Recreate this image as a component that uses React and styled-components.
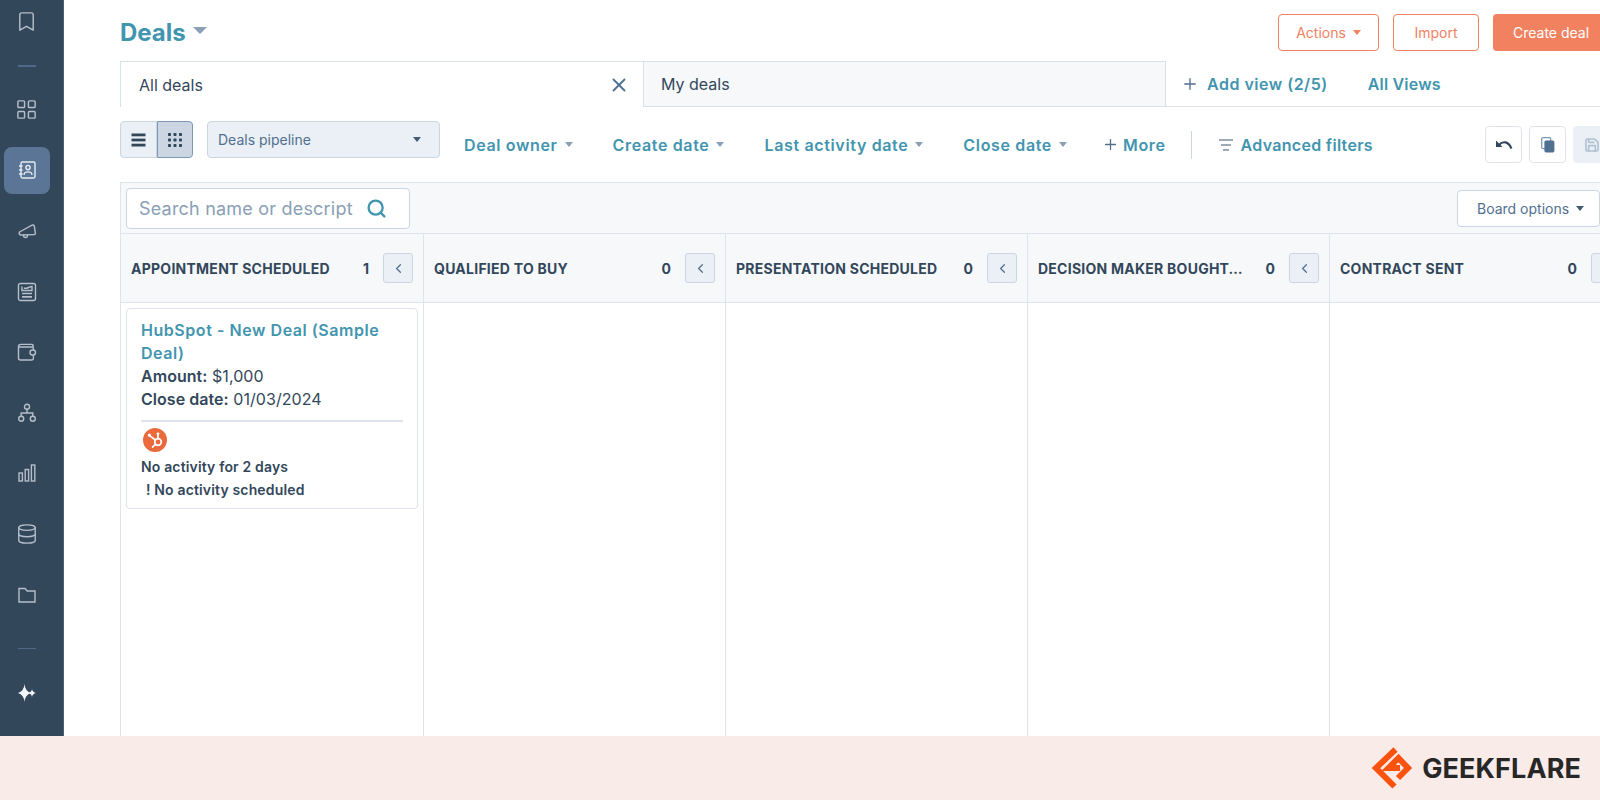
import styled, { createGlobalStyle } from "styled-components";
import { Bookmark, ChevronLeft, Database, LayoutGrid, Plus, Save, Search, X } from "lucide-react";

const TEAL = "#4295ae";
const SLATE = "#33475b";
const BORDER = "#dfe3eb";
const ORANGE = "#f2815f";
const PANEL = "#f6f8fa";

const FILTERS = ["Deal owner", "Create date", "Last activity date", "Close date"];

const COLUMNS = [
    { name: "APPOINTMENT SCHEDULED", count: 1 },
    { name: "QUALIFIED TO BUY", count: 0 },
    { name: "PRESENTATION SCHEDULED", count: 0 },
    { name: "DECISION MAKER BOUGHT-IN", count: 0 },
    { name: "CONTRACT SENT", count: 0 },
];

const RailSvg = ({ children }) => (
    <svg width="20" height="20" viewBox="0 0 20 20" fill="none" stroke="currentColor" strokeWidth="1.4">
        {children}
    </svg>
);

const ContactsIcon = () => (
    <RailSvg>
        <rect x="4" y="2" width="14" height="16" rx="1.4" />
        <path d="M2 6 H5.5 M2 10 H5.5 M2 14 H5.5" />
        <circle cx="11" cy="7.6" r="2.1" />
        <path d="M7 15 C7 10.8 15 10.8 15 15" />
    </RailSvg>
);

const MegaphoneIcon = () => (
    <RailSvg>
        <path d="M2.5 11 L15.5 4 Q17 3.8 17.3 5 L18.4 12.6 Q18.4 13.6 17.2 13.6 L3.4 14 Q1.6 13 2.5 11 Z" />
        <path d="M6.5 14 C6.5 17.4 10.5 17.4 10.5 14" />
    </RailSvg>
);

const NewsIcon = () => (
    <RailSvg>
        <rect x="1.5" y="1.5" width="17" height="17" rx="2" />
        <path d="M5 4.5 V8.5 H15 V4.5 C12 4.5 10 7.5 7 6" />
        <path d="M5 11.5 H15 M5 14.8 H15" strokeWidth="1.7" />
    </RailSvg>
);

const WalletIcon = () => (
    <RailSvg>
        <path d="M16 5 V3.4 Q16 2.4 14.8 2.4 H3.6 Q1.5 2.4 1.5 4.6 V16 Q1.5 18 3.5 18 H15 Q16.4 18 16.4 16.6 V13" />
        <path d="M2 5 H15 Q16.4 5 16.4 6.4 V8" />
        <rect x="13" y="8" width="5.5" height="5" rx="2.5" />
    </RailSvg>
);

const OrgIcon = () => (
    <RailSvg>
        <circle cx="10" cy="3.8" r="2.5" />
        <circle cx="4.2" cy="15.8" r="2.5" />
        <circle cx="15.8" cy="15.8" r="2.5" />
        <path d="M10 6.3 V10 M4.2 13.3 V10 H15.8 V13.3" />
    </RailSvg>
);

const BarsIcon = () => (
    <RailSvg>
        <rect x="2" y="10" width="3.4" height="8" />
        <rect x="8.2" y="6.5" width="3.4" height="11.5" />
        <rect x="14.4" y="2" width="3.4" height="16" />
    </RailSvg>
);

const FolderIcon = () => (
    <RailSvg>
        <path d="M2 3.5 H8 L10.2 6 H18 V17 H2 Z" />
    </RailSvg>
);

const SparkleIcon = () => (
    <svg width="20" height="20" viewBox="0 0 20 20" fill="currentColor">
        <path d="M7.5 1 Q8 8 14 10 Q8 12 7.5 19 Q7 12 1 10 Q7 8 7.5 1 Z" />
        <path d="M15 6 Q15.4 9.2 19 10 Q15.4 10.8 15 14 Q14.6 10.8 11.4 10 Q14.6 9.2 15 6 Z" />
    </svg>
);

const ListIcon = () => (
    <svg width="15" height="14" viewBox="0 0 15 14" fill={SLATE}>
        <rect x="0.5" y="0.5" width="14" height="2.8" />
        <rect x="0.5" y="5.6" width="14" height="2.8" />
        <rect x="0.5" y="10.7" width="14" height="2.8" />
    </svg>
);

const GridDotsIcon = () => (
    <svg width="16" height="16" viewBox="0 0 16 16" fill={SLATE}>
        {[1, 6.5, 12].map((y) =>
            [1, 6.5, 12].map((x) => <rect key={`${x}-${y}`} x={x} y={y} width="3" height="3" rx="0.7" />)
        )}
    </svg>
);

const UndoIcon = () => (
    <svg width="18" height="12" viewBox="0 0 18 12" fill={SLATE}>
        <path d="M1 1.5 V8 H7.5 Z" />
        <path d="M4 6 C8 1.5 13.5 2.5 16.4 9.5" fill="none" stroke={SLATE} strokeWidth="2.2" />
    </svg>
);

const CopyIcon = () => (
    <svg width="14" height="16" viewBox="0 0 14 16">
        <rect x="0.7" y="0.7" width="9" height="11" rx="1.4" fill="none" stroke="#7c98b6" strokeWidth="1.3" />
        <rect x="3.4" y="3.4" width="10" height="12" rx="1.6" fill="#516f90" />
    </svg>
);

const SprocketIcon = () => (
    <svg width="24" height="24" viewBox="0 0 24 24">
        <circle cx="12" cy="12" r="12" fill="#ea6a3e" />
        <g stroke="#fff" strokeWidth="1.7" fill="none" strokeLinecap="round">
            <circle cx="15" cy="14" r="3.3" />
            <path d="M15 10.7 V6.5" />
            <path d="M12.4 12.2 L7 7.8" />
            <path d="M12.6 16.4 L9.6 19" />
        </g>
        <circle cx="15" cy="5.8" r="1.4" fill="#fff" />
        <circle cx="6.4" cy="7.2" r="1.6" fill="#fff" />
    </svg>
);

const LogoMark = () => (
    <svg width="42" height="42" viewBox="0 0 42 42" fill="none" stroke="#fa5310" strokeWidth="6" strokeLinejoin="miter">
        <path d="M24.5 2.5 L5 21 L23.5 39.5" />
        <path d="M27 31 L37 21 L27.5 11 L17.5 21 H29" />
    </svg>
);

export default function App() {
    return (
        <>
            <GlobalStyle />
            <Page>
                <Main>
                    <Rail>
                        <RailItem $short><Bookmark size={23} strokeWidth={1.5} /></RailItem>
                        <RailLine />
                        <RailItem><LayoutGrid size={23} strokeWidth={1.5} /></RailItem>
                        <RailItem $active><ContactsIcon /></RailItem>
                        <RailItem><MegaphoneIcon /></RailItem>
                        <RailItem><NewsIcon /></RailItem>
                        <RailItem><WalletIcon /></RailItem>
                        <RailItem><OrgIcon /></RailItem>
                        <RailItem><BarsIcon /></RailItem>
                        <RailItem><Database size={22} strokeWidth={1.5} /></RailItem>
                        <RailItem><FolderIcon /></RailItem>
                        <RailLine />
                        <RailItem $bright><SparkleIcon /></RailItem>
                    </Rail>
                    <Content>
                        <TopRow>
                            <Title>Deals<TitleCaret /></Title>
                            <TopActions>
                                <OutlineButton>Actions<Caret $color={ORANGE} /></OutlineButton>
                                <OutlineButton $narrow>Import</OutlineButton>
                                <CreateButton>Create deal</CreateButton>
                            </TopActions>
                        </TopRow>

                        <TabRow>
                            <ActiveTab>
                                All deals
                                <X size={22} strokeWidth={2} color="#516f90" />
                            </ActiveTab>
                            <Tab>My deals</Tab>
                            <TabLink $first><Plus size={18} strokeWidth={1.8} color="#516f90" />Add view (2/5)</TabLink>
                            <TabLink>All Views</TabLink>
                        </TabRow>

                        <FilterRow>
                            <Toggle>
                                <ToggleButton><ListIcon /></ToggleButton>
                                <ToggleButton $active><GridDotsIcon /></ToggleButton>
                            </Toggle>
                            <PipelineSelect>Deals pipeline<Caret $color="#425b76" /></PipelineSelect>
                            <Filters>
                                {FILTERS.map((f) => (
                                    <FilterLink key={f}>{f}<Caret $color="#8aa0b6" /></FilterLink>
                                ))}
                                <MoreLink><Plus size={17} strokeWidth={1.8} color="#516f90" />More</MoreLink>
                            </Filters>
                            <FilterDivider />
                            <AdvancedLink>
                                <svg width="16" height="14" viewBox="0 0 16 14" stroke="#7c8ea3" strokeWidth="1.3">
                                    <path d="M1 2 H15 M3 7 H13 M5 12 H11" />
                                </svg>
                                Advanced filters
                            </AdvancedLink>
                            <IconButtons>
                                <IconButton><UndoIcon /></IconButton>
                                <IconButton><CopyIcon /></IconButton>
                                <IconButton $disabled><Save size={16} strokeWidth={2.4} color="#b0c1d4" /></IconButton>
                            </IconButtons>
                        </FilterRow>

                        <Board>
                            <BoardBar>
                                <SearchBox>
                                    <SearchText>Search name or descript</SearchText>
                                    <Search size={21} strokeWidth={2.7} color={TEAL} />
                                </SearchBox>
                                <BoardOptions>Board options<Caret $color="#425b76" /></BoardOptions>
                            </BoardBar>
                            <Columns>
                                {COLUMNS.map((col) => (
                                    <Column key={col.name}>
                                        <ColumnHeader>
                                            <ColumnName>{col.name}</ColumnName>
                                            <ColumnCount>{col.count}</ColumnCount>
                                            <CollapseButton><ChevronLeft size={15} strokeWidth={2} color="#516f90" /></CollapseButton>
                                        </ColumnHeader>
                                        {col.count > 0 && (
                                            <Card>
                                                <CardTitle>HubSpot - New Deal (Sample Deal)</CardTitle>
                                                <CardLine><strong>Amount:</strong> $1,000</CardLine>
                                                <CardLine><strong>Close date:</strong> 01/03/2024</CardLine>
                                                <CardRule />
                                                <OwnerBadge><SprocketIcon /></OwnerBadge>
                                                <CardNote>No activity for 2 days</CardNote>
                                                <CardNote $indent>! No activity scheduled</CardNote>
                                            </Card>
                                        )}
                                    </Column>
                                ))}
                            </Columns>
                        </Board>
                    </Content>
                </Main>
                <Footer>
                    <LogoMark />
                    <LogoText>GEEKFLARE</LogoText>
                </Footer>
            </Page>
        </>
    );
}

const GlobalStyle = createGlobalStyle`
    body {
        margin: 0;
        font-family: "Inter", "Noto Sans", sans-serif;
        color: ${SLATE};
        background-color: #ffffff;
    }
`;

const Page = styled.div`
    width: 1600px;
    height: 800px;
    display: flex;
    flex-direction: column;
    overflow: hidden;
`;

const Main = styled.div`
    display: flex;
    height: 736px;
`;

const Rail = styled.nav`
    width: 64px;
    flex-shrink: 0;
    display: flex;
    flex-direction: column;
    align-items: center;
    background-color: #33475b;
    box-sizing: border-box;
    padding-right: 10px;
    border-right: 1px solid #4a5f75;
`;

const RailItem = styled.div`
    height: ${(p) => (p.$short ? "42px" : "60.6px")};
    width: 46px;
    display: flex;
    align-items: center;
    justify-content: center;
    flex-shrink: 0;
    color: ${(p) => (p.$bright ? "#f2f5f8" : "#b5bec9")};
    position: relative;
    z-index: 0;

    ${(p) => p.$active && `
        color: #e6ebf0;
        &::before {
            content: "";
            position: absolute;
            inset: 7px 0;
            background-color: #5a7595;
            border-radius: 8px;
            z-index: -1;
        }
    `}
`;

const RailLine = styled.div`
    width: 18px;
    height: 1.5px;
    margin: 23px 0 13px;
    background-color: #4f6a88;
    flex-shrink: 0;
`;

const Content = styled.div`
    flex: 1;
    min-width: 0;
    display: flex;
    flex-direction: column;
    padding-left: 56px;
    overflow: hidden;
`;

const TopRow = styled.div`
    display: flex;
    align-items: center;
    justify-content: space-between;
    height: 37px;
    margin-top: 14px;
    margin-bottom: 10px;
`;

const Title = styled.h1`
    display: flex;
    align-items: center;
    margin: 0;
    font-size: 24px;
    font-weight: 700;
    color: ${TEAL};
`;

const TitleCaret = styled.span`
    margin-left: 7px;
    margin-top: -4px;
    border-left: 7px solid transparent;
    border-right: 7px solid transparent;
    border-top: 7px solid #8aa0b6;
`;

const Caret = styled.span`
    display: inline-block;
    margin-left: 7px;
    border-left: 4.5px solid transparent;
    border-right: 4.5px solid transparent;
    border-top: 5px solid ${(p) => p.$color};
`;

const TopActions = styled.div`
    display: flex;
    gap: 14px;
    margin-right: -20px;
`;

const OutlineButton = styled.button`
    display: flex;
    align-items: center;
    justify-content: center;
    width: ${(p) => (p.$narrow ? "86px" : "101px")};
    height: 37px;
    font-family: inherit;
    font-size: 14px;
    color: ${ORANGE};
    background-color: #ffffff;
    border: 1.5px solid ${ORANGE};
    border-radius: 4px;
`;

const CreateButton = styled.button`
    width: 127px;
    height: 37px;
    padding: 0 0 0 4px;
    text-align: left;
    text-indent: 16px;
    font-family: inherit;
    font-size: 14px;
    color: #ffffff;
    background-color: ${ORANGE};
    border: none;
    border-radius: 4px;
`;

const TabRow = styled.div`
    display: flex;
    height: 46px;
    box-sizing: border-box;
    border-bottom: 1.5px solid ${BORDER};
`;

const Tab = styled.div`
    width: 523px;
    box-sizing: border-box;
    height: 46px;
    display: flex;
    align-items: center;
    padding-left: 17px;
    font-size: 16px;
    background-color: ${PANEL};
    border: 1.5px solid #d8e0ea;
`;

const ActiveTab = styled.div`
    width: 523px;
    box-sizing: border-box;
    height: 46px;
    display: flex;
    align-items: center;
    justify-content: space-between;
    padding: 0 13px 0 18px;
    font-size: 16px;
    background-color: #ffffff;
    border: 1.5px solid #d8e0ea;
    border-bottom: none;
    border-right: none;
`;

const TabLink = styled.div`
    display: flex;
    align-items: center;
    gap: 8px;
    margin-left: ${(p) => (p.$first ? "15px" : "40px")};
    font-size: 16px;
    font-weight: 600;
    letter-spacing: ${(p) => (p.$first ? "0.5px" : "0.2px")};
    color: ${TEAL};
`;

const FilterRow = styled.div`
    display: flex;
    align-items: center;
    height: 76px;
    flex-shrink: 0;
    border-bottom: 1.5px solid ${BORDER};
    box-sizing: border-box;
`;

const Toggle = styled.div`
    display: flex;
    height: 37px;
    align-self: flex-start;
    margin-top: 14px;
`;

const ToggleButton = styled.div`
    width: 36.5px;
    display: flex;
    align-items: center;
    justify-content: center;
    box-sizing: border-box;
    background-color: ${(p) => (p.$active ? "#cbd6e2" : "#eaf0f6")};
    border: 1px solid ${(p) => (p.$active ? "#7c98b6" : "#cbd6e2")};
    border-radius: ${(p) => (p.$active ? "0 4px 4px 0" : "4px 0 0 4px")};
`;

const PipelineSelect = styled.div`
    width: 233px;
    height: 37px;
    box-sizing: border-box;
    align-self: flex-start;
    margin: 14px 0 0 14px;
    padding: 0 18px 0 10px;
    display: flex;
    align-items: center;
    justify-content: space-between;
    font-size: 14px;
    color: #516f90;
    background-color: #eaf0f6;
    border: 1px solid #cbd6e2;
    border-radius: 4px;
`;

const Filters = styled.div`
    display: flex;
    align-items: center;
    gap: 40px;
    margin-left: 24px;
`;

const FilterLink = styled.div`
    display: flex;
    align-items: center;
    font-size: 16px;
    font-weight: 600;
    letter-spacing: 0.65px;
    color: ${TEAL};
`;

const MoreLink = styled(FilterLink)`
    gap: 4px;
    margin-left: -5px;
`;

const FilterDivider = styled.div`
    width: 1px;
    height: 28px;
    margin-left: 25px;
    background-color: #cbd6e2;
`;

const AdvancedLink = styled(FilterLink)`
    gap: 7px;
    margin-left: 26px;
    letter-spacing: 0.3px;
`;

const IconButtons = styled.div`
    display: flex;
    gap: 7px;
    margin-left: auto;
    margin-right: -10px;
`;

const IconButton = styled.div`
    width: 37px;
    height: 37px;
    box-sizing: border-box;
    display: flex;
    align-items: center;
    justify-content: center;
    background-color: ${(p) => (p.$disabled ? "#eaf0f6" : "#ffffff")};
    border: 1px solid ${(p) => (p.$disabled ? "#eaf0f6" : "#dfe3eb")};
    border-radius: 4px;
`;

const Board = styled.div`
    flex: 1;
    display: flex;
    flex-direction: column;
    min-height: 0;
`;

const BoardBar = styled.div`
    height: 51px;
    flex-shrink: 0;
    box-sizing: border-box;
    display: flex;
    align-items: center;
    justify-content: space-between;
    padding-left: 5px;
    background-color: ${PANEL};
    border-bottom: 1.5px solid ${BORDER};
    border-left: 1.5px solid ${BORDER};
`;

const SearchBox = styled.div`
    width: 284px;
    height: 41px;
    box-sizing: border-box;
    display: flex;
    align-items: center;
    padding: 0 22px 0 12px;
    justify-content: space-between;
    background-color: #ffffff;
    border: 1.5px solid #cbd6e2;
    border-radius: 4px;
`;

const SearchText = styled.span`
    font-size: 18px;
    letter-spacing: 0.2px;
    color: #8aa0b6;
`;

const BoardOptions = styled.div`
    width: 143px;
    height: 37px;
    box-sizing: border-box;
    display: flex;
    align-items: center;
    padding-left: 19px;
    font-size: 14px;
    white-space: nowrap;
    color: #516f90;
    background-color: #ffffff;
    border: 1px solid #cbd6e2;
    border-radius: 4px;
`;

const Columns = styled.div`
    flex: 1;
    display: flex;
`;

const Column = styled.div`
    width: 302px;
    flex-shrink: 0;
    box-sizing: border-box;
    border-left: 1.5px solid ${BORDER};

    &:first-child {
        width: 303px;
    }
`;

const ColumnHeader = styled.div`
    height: 69px;
    box-sizing: border-box;
    display: flex;
    align-items: center;
    padding: 0 10px;
    background-color: ${PANEL};
    border-bottom: 1.5px solid ${BORDER};
`;

const ColumnName = styled.span`
    flex: 1;
    min-width: 0;
    font-size: 14px;
    font-weight: 700;
    letter-spacing: 0.25px;
    overflow: hidden;
    text-overflow: ellipsis;
    white-space: nowrap;
`;

const ColumnCount = styled.span`
    margin-left: 17px;
    font-size: 14px;
    font-weight: 700;
`;

const CollapseButton = styled.div`
    width: 30px;
    height: 30px;
    flex-shrink: 0;
    box-sizing: border-box;
    margin-left: 14px;
    display: flex;
    align-items: center;
    justify-content: center;
    background-color: #eaf0f6;
    border: 1px solid #cbd6e2;
    border-radius: 3px;
`;

const Card = styled.div`
    margin: 5px 5px 0 5px;
    padding: 10px 14px 7px;
    height: 201px;
    box-sizing: border-box;
    background-color: #ffffff;
    border: 1.5px solid ${BORDER};
    border-radius: 4px;
`;

const CardTitle = styled.div`
    font-size: 16px;
    line-height: 23px;
    font-weight: 600;
    letter-spacing: 0.55px;
    color: ${TEAL};
`;

const CardLine = styled.div`
    font-size: 16px;
    line-height: 23px;
    letter-spacing: 0.05px;
    strong {
        font-weight: 600;
    }
`;

const CardRule = styled.div`
    height: 1.5px;
    margin: 9px 0 6px;
    background-color: ${BORDER};
`;

const OwnerBadge = styled.div`
    height: 24px;
    margin: 0 0 3px 2px;
    svg {
        display: block;
    }
`;

const CardNote = styled.div`
    font-size: 14px;
    line-height: 23px;
    font-weight: 600;
    letter-spacing: 0.15px;
    padding-left: ${(p) => (p.$indent ? "5px" : "0")};
`;

const Footer = styled.footer`
    flex: 1;
    display: flex;
    align-items: center;
    justify-content: flex-end;
    gap: 9px;
    padding-right: 19px;
    background-color: #f9ebe7;
`;

const LogoText = styled.span`
    font-size: 27px;
    font-weight: 700;
    letter-spacing: 0.1px;
    color: #272727;
`;
